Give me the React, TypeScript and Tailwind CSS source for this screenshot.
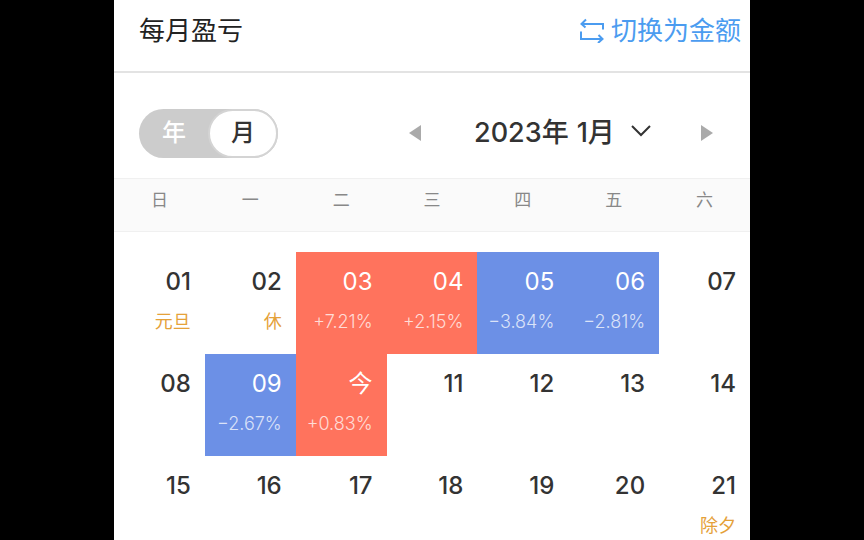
const FONT = "font-['Inter','Noto_Sans_CJK_SC',sans-serif]";

type Day = {
  label: string;
  note?: string;
  kind?: "up" | "down";
};

const WEEK = ["日", "一", "二", "三", "四", "五", "六"];

const DAYS: Day[] = [
  { label: "01", note: "元旦" },
  { label: "02", note: "休" },
  { label: "03", note: "+7.21%", kind: "up" },
  { label: "04", note: "+2.15%", kind: "up" },
  { label: "05", note: "−3.84%", kind: "down" },
  { label: "06", note: "−2.81%", kind: "down" },
  { label: "07" },
  { label: "08" },
  { label: "09", note: "−2.67%", kind: "down" },
  { label: "今", note: "+0.83%", kind: "up" },
  { label: "11" },
  { label: "12" },
  { label: "13" },
  { label: "14" },
  { label: "15" },
  { label: "16" },
  { label: "17" },
  { label: "18" },
  { label: "19" },
  { label: "20" },
  { label: "21", note: "除夕" },
];

function SwitchIcon() {
  return (
    <svg width="26" height="26" viewBox="0 0 26 26" fill="none" stroke="#4b9cf0" strokeWidth="2" className="shrink-0">
      <path d="M7 2.5 L2.5 7 L6.5 10.5 M2.5 7 H24 V12.5" />
      <path d="M19 26 L23.5 22 L19.5 18 M23.5 22 H2 V14.5" />
    </svg>
  );
}

function Cell({ day }: { day: Day }) {
  const bg = day.kind === "up" ? "bg-[#ff735d]" : day.kind === "down" ? "bg-[#6c90e6]" : "";
  const num = day.kind ? "text-white font-normal" : "text-[#333333] font-[450]";
  const sub = day.kind ? "text-white/75 font-light" : "text-[#e5a139]";
  return (
    <div className={`h-[102px] pr-[14px] text-right ${bg}`}>
      <div className={`pt-[14px] text-[24px] leading-[32px] ${num}`}>{day.label}</div>
      {day.note && <div className={`mt-[12px] text-[18px] leading-[24px] ${sub}`}>{day.note}</div>}
    </div>
  );
}

export default function App() {
  return (
    <div className={`flex h-[540px] w-[864px] justify-center overflow-hidden bg-black ${FONT}`}>
      <div className="h-[540px] w-[636px] bg-white">
        {/* title bar */}
        <div className="flex h-[73px] items-center justify-between border-b-2 border-[#e3e3e3] pb-[11px] pl-[25px] pr-[9px]">
          <span className="text-[26px] text-[#222222]">每月盈亏</span>
          <span className="flex items-center gap-[6px] text-[26px] text-[#4b9cf0]">
            <SwitchIcon />
            切换为金额
          </span>
        </div>

        {/* year / month toggle + month picker */}
        <div className="flex h-[105px] items-center pt-[15px] pl-[25px]">
          <div className="flex h-[49px] w-[139px] items-center rounded-full bg-[#cccccc]">
            <span className="flex-1 pl-[1px] text-center text-[24px] font-medium text-white">年</span>
            <span className="flex h-[49px] w-[70px] items-center justify-center rounded-full border-2 border-[#d4d4d4] bg-white text-[24px] font-medium text-[#333333]">
              月
            </span>
          </div>
          <span className="ml-[131px] h-0 w-0 border-y-[8px] border-r-[12px] border-y-transparent border-r-[#aaaaaa]" />
          <span className="ml-[53px] flex gap-[8px] text-[27px] font-medium text-[#333333]">
            <span>2023年</span>
            <span>1月</span>
          </span>
          <svg width="22" height="14" viewBox="0 0 22 14" fill="none" stroke="#333333" strokeWidth="2" className="mb-[5px] ml-[15px]">
            <path d="M2 2 L11 11 L20 2" />
          </svg>
          <span className="ml-[49px] h-0 w-0 border-y-[8px] border-l-[12px] border-y-transparent border-l-[#aaaaaa]" />
        </div>

        {/* weekday header */}
        <div className="grid h-[54px] grid-cols-7 items-center border-y border-[#f0f0f0] bg-[#fafafa]">
          {WEEK.map((w) => (
            <span key={w} className="pb-[8px] text-center text-[17px] text-[#888888]">
              {w}
            </span>
          ))}
        </div>

        {/* calendar */}
        <div className="mt-[20px] grid grid-cols-7">
          {DAYS.map((d) => (
            <Cell key={d.label} day={d} />
          ))}
        </div>
      </div>
    </div>
  );
}
